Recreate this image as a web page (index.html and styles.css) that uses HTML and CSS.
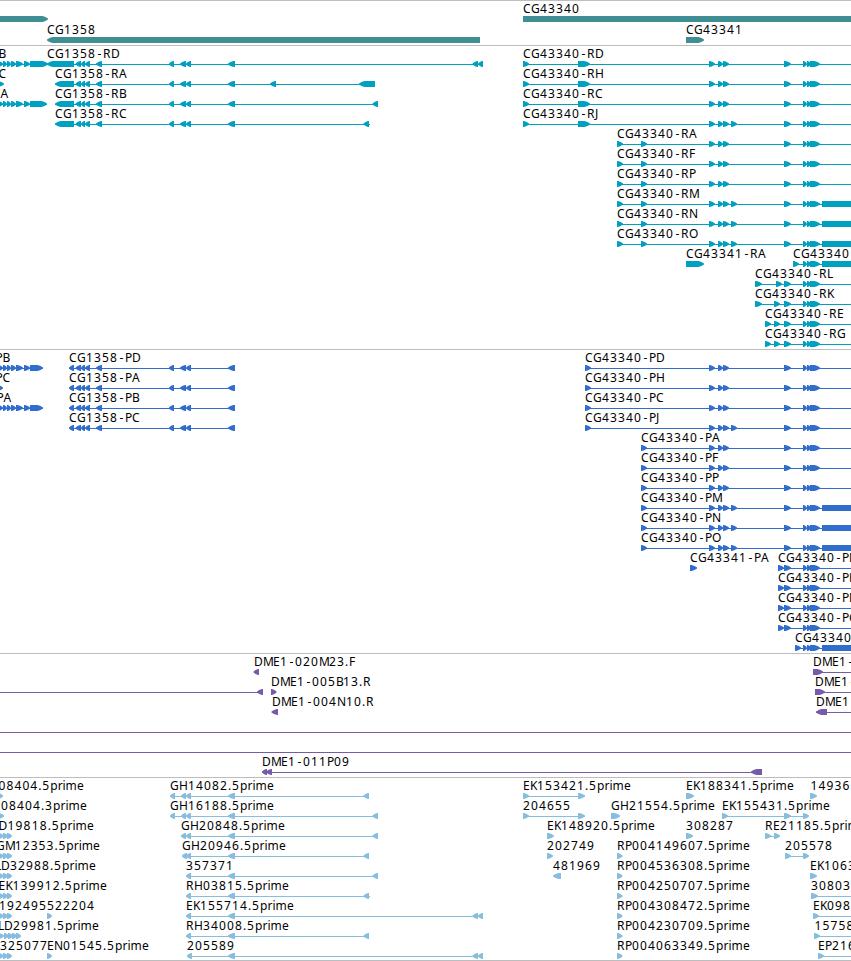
FILE: index.html
```
<!DOCTYPE html>
<html lang="en">
<head>
    <meta charset="UTF-8">
    <meta name="viewport" content="width=device-width, initial-scale=1.0">
    <title>Genome Browser</title>
    <link rel="stylesheet" href="styles.css">
</head>
<body>
    <main class="browser" id="browser"></main>
    <script src="tracks.js"></script>
</body>
</html>
```

FILE: styles.css
```
* {
    margin: 0;
    padding: 0;
    box-sizing: border-box;
}

body {
    background: #fff;
    overflow: hidden;
}

.browser {
    display: flex;
    flex-direction: column;
    width: 851px;
    height: 961px;
    border-bottom: 1px solid #bdbdbd;
}

.track {
    border-top: 1px solid #bdbdbd;
    overflow: hidden;
}

.track svg {
    display: block;
    width: 100%;
    height: 100%;
}

.track text {
    font-family: 'Noto Sans', 'Open Sans', sans-serif;
    font-size: 12px;
    fill: #000;
}

.track-gene {
    height: 45px;
    color: #3e8e93;
}

.track-transcript {
    height: 304px;
    color: #00a0c0;
}

.track-cds {
    height: 304px;
    color: #316dcd;
}

.track-clone {
    height: 124px;
    color: #785aaa;
}

.track-est {
    height: 183px;
    color: #87bddf;
}
```

FILE: tracks.js
```
const SVG_NS = 'http://www.w3.org/2000/svg';

// Label advance widths in pixels
const ADVANCE = {
    C: 8, G: 9, R: 8, D: 9, H: 9, P: 7, E: 7, K: 7, N: 9, M: 10,
    L: 6, F: 6, J: 4, B: 7, A: 8, O: 10, '.': 4, '-': 7,
    p: 7.5, r: 5, i: 3, m: 11.5, e: 7
};

// Exons shared between the transcripts
const leftExons = [[-2, 3], [3, 7], [7, 11], [11, 16], [16, 23], [24, 30]];
const cg1358 = [[75.5, 81], [81, 85], [85, 90], [96, 102], [169, 174], [180, 186], [186, 191], [228, 235]];
const tail = [[803, 807], [807, 811], [810, 820]];
const mid = [[709, 715], [718, 723], [723, 729]];
const common = [...mid, [784, 791], ...tail];
const withExtra = [...mid, [731, 737], [784, 791], ...tail];
const block = [822, 860];

// label, label x, strand, exons, connecting line, label end
function f(label, x, dir, exons, line, end) {
    return { label, x, dir, exons, line, end };
}

function rev(label, x, exons, last) {
    return f(label, x, -1, exons, [x, last]);
}

function fwd(label, x, exons) {
    return f(label, x, 1, exons, [x, 860]);
}

const tracks = [
    {
        name: 'gene',
        pitch: 21,
        rows: [
            [f('', 0, 1, [[-10, 48]]), f('CG43340', 523, 1, [[523, 860]])],
            [f('CG1358', 47, -1, [[47, 480]]), f('CG43341', 686, 1, [[686, 704]])]
        ]
    },
    {
        name: 'transcript',
        pitch: 20,
        rows: [
            [f('B', -1.5, 1, [...leftExons, [30, 48]], [-5, 48]),
             rev('CG1358-RD', 47, [[47, 74], ...cg1358, [472.5, 478], [478, 483]], 483),
             fwd('CG43340-RD', 523, [[523, 529], [578, 590], ...common])],
            [f('C', -1.5, 1, [[-3, 4]]),
             rev('CG1358-RA', 55, [[55, 74], ...cg1358, [270, 276], [359, 375]], 375),
             fwd('CG43340-RH', 523, [[523, 529], [578, 590], ...common])],
            [f('A', 0.5, 1, [...leftExons, [30, 47]], [-5, 47]),
             rev('CG1358-RB', 55, [[55, 74], ...cg1358, [372.5, 378]], 378),
             fwd('CG43340-RC', 523, [[523, 529], [578, 590], ...common])],
            [rev('CG1358-RC', 55, [[55, 74], ...cg1358, [363.5, 369]], 370),
             fwd('CG43340-RJ', 523, [[523, 529], [578, 590], ...withExtra])],
            [fwd('CG43340-RA', 617, [[617, 623], [641, 647], ...common])],
            [fwd('CG43340-RF', 617, [[617, 623], [641, 647], ...common])],
            [fwd('CG43340-RP', 617, [[617, 623], [641, 647], ...common])],
            [fwd('CG43340-RM', 617, [[617, 623], [641, 647], ...withExtra, block])],
            [fwd('CG43340-RN', 617, [[617, 623], [641, 647], ...withExtra, block])],
            [fwd('CG43340-RO', 617, [[617, 623], [641, 647], ...withExtra, block])],
            [f('CG43341-RA', 686, 1, [[686, 704]]),
             fwd('CG43340', 793, [[793, 799], ...tail, block])],
            [fwd('CG43340-RL', 755, [[755, 762], [776, 782], [784, 791], ...tail])],
            [fwd('CG43340-RK', 755, [[755, 762], [774, 780], [784, 791], ...tail])],
            [fwd('CG43340-RE', 765, [[765, 771], [774, 780], [784, 791], ...tail])],
            [fwd('CG43340-RG', 765, [[765, 771], [774, 780], [784, 791], ...tail])]
        ]
    },
    {
        name: 'cds',
        pitch: 20,
        rows: [
            [f('PB', -4.5, 1, [...leftExons, [30, 43]], [-5, 43]),
             rev('CG1358-PD', 69, [[69, 74], ...cg1358], 234),
             fwd('CG43340-PD', 585, [[585, 591], ...common])],
            [f('PC', -4.5, 1, [[-3, 3]]),
             rev('CG1358-PA', 69, [[69, 74], ...cg1358], 234),
             fwd('CG43340-PH', 585, [[585, 591], ...common])],
            [f('PA', -3.5, 1, [...leftExons, [30, 43]], [-5, 43]),
             rev('CG1358-PB', 69, [[69, 74], ...cg1358], 234),
             fwd('CG43340-PC', 585, [[585, 591], ...common])],
            [rev('CG1358-PC', 69, [[69, 74], ...cg1358], 234),
             fwd('CG43340-PJ', 585, [[585, 591], ...withExtra])],
            [fwd('CG43340-PA', 641, [[641, 647], ...common])],
            [fwd('CG43340-PF', 641, [[641, 647], ...common])],
            [fwd('CG43340-PP', 641, [[641, 647], ...common])],
            [fwd('CG43340-PM', 641, [[641, 647], ...withExtra, block])],
            [fwd('CG43340-PN', 641, [[641, 647], ...withExtra, block])],
            [fwd('CG43340-PO', 641, [[641, 647], ...withExtra, block])],
            [f('CG43341-PA', 690, 1, [[690, 697]]),
             fwd('CG43340-PL', 778, [[778, 784], [784, 791], ...tail])],
            [fwd('CG43340-PK', 778, [[778, 784], [784, 791], ...tail])],
            [fwd('CG43340-PE', 778, [[778, 784], [784, 791], ...tail])],
            [fwd('CG43340-PG', 778, [[778, 784], [784, 791], ...tail])],
            [fwd('CG43340', 795, [[795, 801], ...tail, block])]
        ]
    },
    {
        name: 'clone',
        pitch: 20,
        rows: [
            [f('DME1-020M23.F', 254, -1, [[253.5, 259]]),
             fwd('DME1-', 813, [[813, 823]])],
            [f('', 0, -1, [[257, 263]], [-5, 262]),
             f('DME1-005B13.R', 271, 1, [[271, 276.5]]),
             fwd('DME1-', 815, [[815, 825]])],
            [f('DME1-004N10.R', 272, -1, [[271.5, 278]]),
             f('DME1', 816, -1, [[816, 827]], [816, 860])],
            [f('', 0, 1, [], [-5, 860])],
            [f('', 0, 1, [], [-5, 860])],
            [rev('DME1-011P09', 262, [[262, 267], [266, 272], [751, 762]], 762)]
        ]
    },
    {
        name: 'est',
        pitch: 20,
        rows: [
            [f('08404.5prime', -1.5, 1, [[-2, 3]], null, 84),
             rev('GH14082.5prime', 170, [[170, 175], [181, 186], [186, 191], [228, 235], [363.5, 369]], 369),
             f('EK153421.5prime', 523, 1, [[523, 529], [578, 585]], [523, 585]),
             f('EK188341.5prime', 686, 1, [[686, 694]]),
             f('14936', 810.5, 1, [[810, 817]])],
            [f('08404.3prime', 1, 1, [[-2, 4]], null, 87),
             rev('GH16188.5prime', 170, [[170, 175], [181, 186], [186, 191], [228, 235], [372.5, 378]], 378),
             f('204655', 523, 1, [[523, 529], [578, 585]], [523, 585]),
             f('GH21554.5prime', 611, 1, [[611, 620]]),
             f('EK155431.5prime', 722, 1, [[722, 728], [784, 791], [803, 809]], [722, 808])],
            [f('D19818.5prime', -1.5, 1, [[-2, 4], [3, 8], [7, 12]], null, 94),
             rev('GH20848.5prime', 181, [[181, 186], [186, 191], [228, 235], [372.5, 378]], 378),
             f('EK148920.5prime', 547, 1, [[547, 554]]),
             f('308287', 686, 1, [[686, 693]]),
             f('RE21185.5prime', 765, 1, [[765, 771], [774, 780]], [765, 780])],
            [f('GM12353.5prime', -4, 1, [[-2, 4], [3, 8], [7, 12]], null, 100),
             rev('GH20946.5prime', 182, [[182, 187], [186, 191], [228, 235], [363.5, 369]], 369),
             f('202749', 547, 1, [[547, 553]]),
             f('RP004149607.5prime', 617, 1, [[617, 622.5]]),
             f('205578', 785, 1, [[785, 791], [803, 809]], [785, 808])],
            [f('LD32988.5prime', -5, 1, [[-2, 4], [3, 8], [7, 12]], null, 96),
             rev('357371', 186, [[186, 191], [228, 235], [372.5, 378]], 378),
             f('481969', 553, -1, [[553, 561]]),
             f('RP004536308.5prime', 617, 1, [[617, 622.5]]),
             f('EK1063', 810, 1, [[810, 817]])],
            [f('EK139912.5prime', -1.5, 1, [[-2, 4], [3, 8], [7, 12]], null, 107),
             rev('RH03815.5prime', 186, [[186, 191], [228, 235], [363.5, 369]], 370),
             f('RP004250707.5prime', 617, 1, [[617, 622.5]]),
             fwd('30803', 811, [[811, 818]])],
            [f('192495', -1, 1, [[-2, 4], [3, 8], [7, 12]]),
             f('522204', 47, 1, [[47, 52]]),
             rev('EK155714.5prime', 186, [[186, 191], [228, 235], [472.5, 478], [478, 483]], 483),
             f('RP004308472.5prime', 617, 1, [[617, 622.5]]),
             fwd('EK098', 813, [[813, 819]])],
            [f('LD29981.5prime', -2, 1, [[-2, 4], [4, 9], [8, 13], [12, 17], [16, 21]], null, 99),
             rev('RH34008.5prime', 186, [[186, 191], [228, 235], [363.5, 369]], 369),
             f('RP004230709.5prime', 617, 1, [[617, 622.5]]),
             fwd('15758', 814.5, [[814, 820]])],
            [f('325077', 0, 1, [[-2, 4], [3, 8], [7, 12]]),
             f('EN01545.5prime', 47, 1, [[47, 52]], null, 149),
             rev('205589', 187, [[187, 192], [228, 235], [472.5, 478], [478, 483]], 483),
             f('RP004063349.5prime', 617, 1, [[617, 622.5]]),
             fwd('EP216', 818, [[818, 824]])]
        ]
    }
];

function add(parent, tag, attrs) {
    const el = document.createElementNS(SVG_NS, tag);
    for (const key in attrs) {
        el.setAttribute(key, attrs[key]);
    }
    parent.appendChild(el);
    return el;
}

// Box with a rounded-off arrow head on the side the strand runs to
function drawExon(svg, start, end, dir, y) {
    const head = Math.min(5.5, end - start - 1);
    const tip = dir > 0 ? end : start;
    const base = dir > 0 ? start : end;
    const neck = tip - dir * head;
    const cheek = tip - dir * head * 0.45;
    const points = [
        [base, y], [neck, y], [cheek, y + 1], [tip, y + 2.4],
        [tip, y + 3.6], [cheek, y + 5], [neck, y + 6], [base, y + 6]
    ];
    add(svg, 'polygon', { points: points.join(' '), fill: 'currentColor' });
}

function drawLabel(svg, feature, y) {
    const widths = [...feature.label].map(c => ADVANCE[c] || 8);
    const total = widths.reduce((a, b) => a + b, 0);
    const scale = feature.end ? (feature.end - feature.x) / total : 1;
    let x = feature.x;
    const xs = widths.map((w, i) => {
        // hyphens sit in the middle of their cell
        const at = feature.label[i] === '-' ? x + 1.5 : x;
        x += w * scale;
        return at.toFixed(1);
    });
    add(svg, 'text', { x: xs.join(' '), y }).textContent = feature.label;
}

tracks.forEach(track => {
    const section = document.createElement('section');
    section.className = `track track-${track.name}`;
    const svg = add(section, 'svg', {});

    track.rows.forEach((row, i) => {
        const top = i * track.pitch;
        row.forEach(feature => {
            if (feature.line) {
                const [from, to] = feature.line;
                add(svg, 'rect', { x: from, y: top + 18, width: to - from, height: 1, fill: 'currentColor' });
            }
            feature.exons.forEach(([start, end]) => drawExon(svg, start, end, feature.dir, top + 15));
            if (feature.label) {
                drawLabel(svg, feature, top + 12);
            }
        });
    });

    document.getElementById('browser').appendChild(section);
});
```
